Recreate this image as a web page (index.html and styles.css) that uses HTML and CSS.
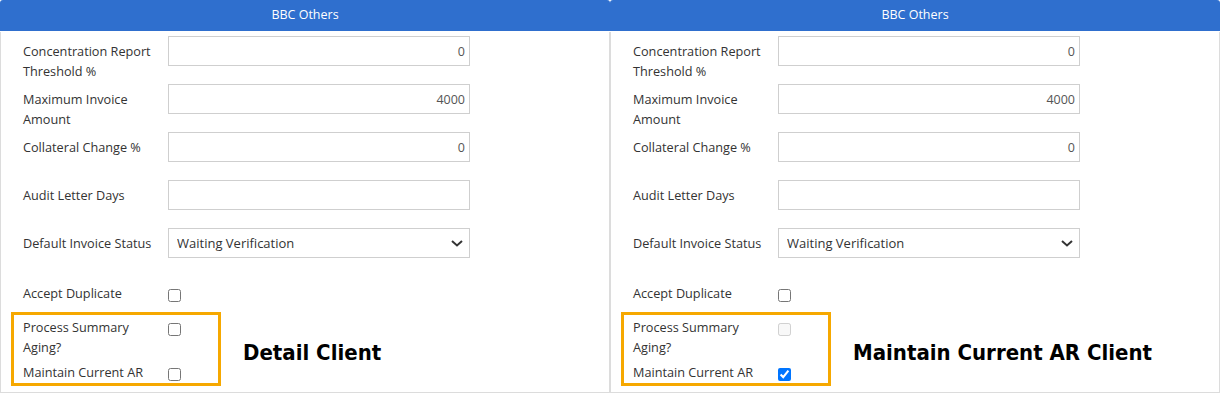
FILE: index.html
```html
<!DOCTYPE html>
<html lang="en">
<head>
  <meta charset="UTF-8" />
  <title>BBC Others</title>
  <link rel="stylesheet" href="styles.css">
</head>
<body>
  <div class="wrap">
    <section class="panel">
      <div class="panel-head">BBC Others</div>
      <div class="panel-body">
        <div class="row">
          <label class="label">Concentration Report Threshold %</label>
          <input class="field num" value="0">
        </div>
        <div class="row">
          <label class="label">Maximum Invoice Amount</label>
          <input class="field num" value="4000">
        </div>
        <div class="row">
          <label class="label">Collateral Change %</label>
          <input class="field num" value="0">
        </div>
        <div class="row">
          <label class="label">Audit Letter Days</label>
          <input class="field num" value="">
        </div>
        <div class="row row-select">
          <label class="label">Default Invoice Status</label>
          <div class="select">
            <select>
              <option>Waiting Verification</option>
            </select>
            <svg class="chevron" width="12" height="7" viewBox="0 0 12 7"><polyline points="1,1 6,5.5 11,1" fill="none" stroke="#333" stroke-width="2"/></svg>
          </div>
        </div>
        <div class="row check-row">
          <label class="label">Accept Duplicate</label>
          <input type="checkbox" class="check">
        </div>
        <div class="note">
          <div class="highlight">
            <div class="row check-row">
              <label class="label">Process Summary Aging?</label>
              <input type="checkbox" class="check">
            </div>
            <div class="row check-row">
              <label class="label">Maintain Current AR</label>
              <input type="checkbox" class="check">
            </div>
          </div>
          <div class="note-text">Detail Client</div>
        </div>
      </div>
    </section>

    <section class="panel">
      <div class="panel-head">BBC Others</div>
      <div class="panel-body">
        <div class="row">
          <label class="label">Concentration Report Threshold %</label>
          <input class="field num" value="0">
        </div>
        <div class="row">
          <label class="label">Maximum Invoice Amount</label>
          <input class="field num" value="4000">
        </div>
        <div class="row">
          <label class="label">Collateral Change %</label>
          <input class="field num" value="0">
        </div>
        <div class="row">
          <label class="label">Audit Letter Days</label>
          <input class="field num" value="">
        </div>
        <div class="row row-select">
          <label class="label">Default Invoice Status</label>
          <div class="select">
            <select>
              <option>Waiting Verification</option>
            </select>
            <svg class="chevron" width="12" height="7" viewBox="0 0 12 7"><polyline points="1,1 6,5.5 11,1" fill="none" stroke="#333" stroke-width="2"/></svg>
          </div>
        </div>
        <div class="row check-row">
          <label class="label">Accept Duplicate</label>
          <input type="checkbox" class="check">
        </div>
        <div class="note">
          <div class="highlight">
            <div class="row check-row">
              <label class="label">Process Summary Aging?</label>
              <input type="checkbox" class="check" disabled>
            </div>
            <div class="row check-row">
              <label class="label">Maintain Current AR</label>
              <input type="checkbox" class="check" checked>
            </div>
          </div>
          <div class="note-text">Maintain Current AR Client</div>
        </div>
      </div>
    </section>
  </div>
</body>
</html>
```

FILE: styles.css
```css
body {
  margin: 0;
  font-family: 'Open Sans', sans-serif;
  font-size: 12.7px;
  color: #333;
  background: #fff;
}

.wrap {
  display: flex;
  width: 1220px;
}

.panel {
  width: 610px;
}

.panel-head {
  height: 31px;
  line-height: 30px;
  font-size: 12.5px;
  background: #2f6fce;
  color: #fff;
  text-align: center;
  border-radius: 3px 3px 0 0;
}

.panel-body {
  box-sizing: border-box;
  height: 361px;
  margin-top: 1px;
  padding: 4px 0 0 22px;
  border: 1px solid #dcdcdc;
  border-top: none;
}

.row {
  display: flex;
  align-items: flex-start;
  min-height: 45px;
  margin-bottom: 3px;
}

.row-select {
  min-height: 47px;
}

.label {
  flex-shrink: 0;
  box-sizing: border-box;
  width: 145px;
  padding: 5px 10px 0 0;
  line-height: 20px;
}

.field {
  box-sizing: border-box;
  width: 302px;
  height: 30px;
  margin: 0;
  padding: 0 4px;
  border: 1px solid #cfcfcf;
  font: inherit;
  font-size: 12.5px;
  color: #555;
  background: #fff;
}

.num {
  text-align: right;
}

.select {
  position: relative;
  width: 302px;
  height: 30px;
}

.select select {
  appearance: none;
  box-sizing: border-box;
  width: 100%;
  height: 100%;
  margin: 0;
  padding: 0 8px;
  border: 1px solid #cfcfcf;
  border-radius: 0;
  background: #fff;
  font: inherit;
  font-size: 13px;
  color: #333;
}

.chevron {
  position: absolute;
  right: 7px;
  top: 12px;
}

.check-row {
  min-height: 31px;
}

.check {
  width: 13px;
  height: 13px;
  margin: 11px 0 0 0;
}

.note {
  display: flex;
  align-items: center;
}

.highlight {
  box-sizing: border-box;
  width: 210px;
  margin-left: -12px;
  padding: 0 0 1px 9px;
  border: 3px solid #f6a800;
}

.highlight .check-row {
  min-height: 0;
  margin-bottom: 3px;
}

.highlight .check-row:last-child {
  margin-bottom: 0;
}

.highlight .label {
  padding-top: 2px;
}

.highlight .check {
  margin-top: 8px;
}

.note-text {
  margin-left: 22px;
  padding-top: 6px;
  font-family: 'DejaVu Sans', sans-serif;
  font-stretch: condensed;
  font-weight: bold;
  font-size: 22px;
  color: #000;
}
```
